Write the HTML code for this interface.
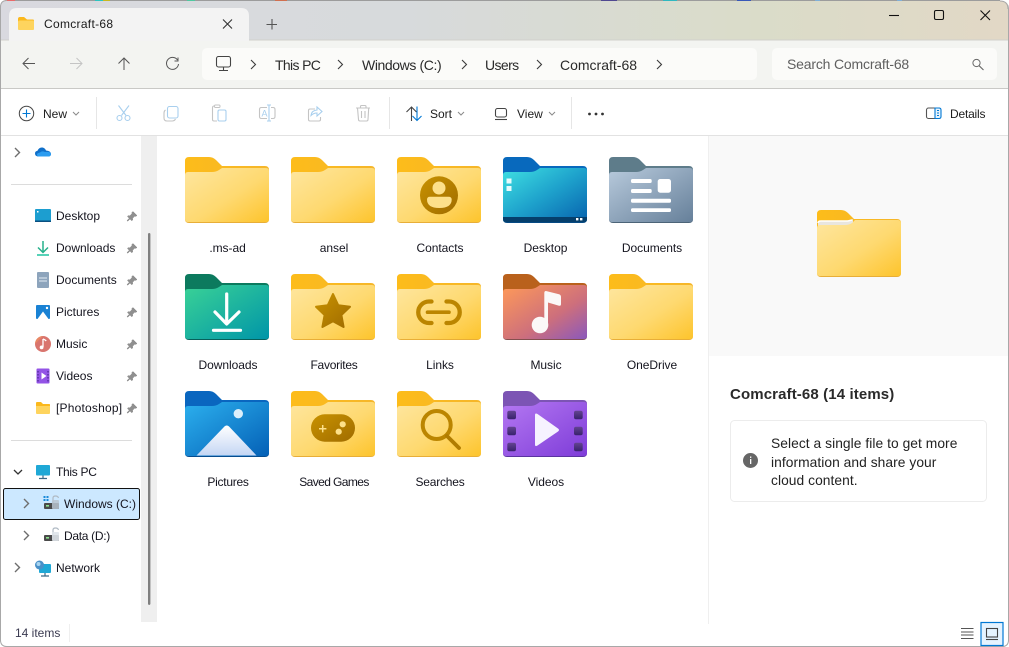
<!DOCTYPE html>
<html><head><meta charset="utf-8"><title>Comcraft-68</title>
<style>
html,body{margin:0;padding:0;width:1009px;height:647px;overflow:hidden;background:#fff}
body{font-family:"Liberation Sans","DejaVu Sans",sans-serif;color:#1a1a1a;position:relative;font-size:12px}
.a{position:absolute}
.t{position:absolute;white-space:nowrap;line-height:16px;height:16px}
.n{font-size:14px;color:#2a2a2a}
.c{font-size:12px;color:#1c1c1c}
.s{font-size:12px;letter-spacing:0;color:#14141e}
.l{font-size:12px;width:106px;text-align:center;letter-spacing:-.05px;color:#14141e}
svg{position:absolute;overflow:visible}
.f{width:84px;height:66px}
</style></head><body>
<svg width="0" height="0" style="position:absolute">
<defs>
<linearGradient id="gy" x1="0" y1="0" x2="1" y2="1"><stop offset="0" stop-color="#fee69f"/><stop offset=".55" stop-color="#fed970"/><stop offset="1" stop-color="#fdc42c"/></linearGradient>
<linearGradient id="gb" x1="0" y1="0" x2="1" y2="0"><stop offset="0" stop-color="#fdbc1a"/><stop offset="1" stop-color="#f5b62a"/></linearGradient>
<linearGradient id="gd" x1="0" y1="0" x2="1" y2="1"><stop offset="0" stop-color="#c89200"/><stop offset="1" stop-color="#a06c00"/></linearGradient>
<linearGradient id="gDesk" x1="0" y1="0" x2="1" y2="1"><stop offset="0" stop-color="#3fe0e2"/><stop offset=".5" stop-color="#1ea2cc"/><stop offset="1" stop-color="#0762ae"/></linearGradient>
<linearGradient id="gDoc" x1="0" y1="0" x2="1" y2="1"><stop offset="0" stop-color="#b8cadc"/><stop offset="1" stop-color="#66809a"/></linearGradient>
<linearGradient id="gDl" x1="0" y1="0" x2="1" y2="1"><stop offset="0" stop-color="#3ad296"/><stop offset="1" stop-color="#0095a8"/></linearGradient>
<linearGradient id="gMu" x1="0" y1="0" x2="1" y2="1"><stop offset="0" stop-color="#ff9a58"/><stop offset=".6" stop-color="#cd6f7c"/><stop offset="1" stop-color="#8a58bc"/></linearGradient>
<linearGradient id="gPi" x1="0" y1="0" x2="1" y2="1"><stop offset="0" stop-color="#2cb0ee"/><stop offset="1" stop-color="#0460b6"/></linearGradient>
<linearGradient id="gMt" x1="0" y1="0" x2="0" y2="1"><stop offset="0" stop-color="#ffffff"/><stop offset="1" stop-color="#c4d6f4"/></linearGradient>
<linearGradient id="gVi" x1="0" y1="0" x2="1" y2="1"><stop offset="0" stop-color="#b478f2"/><stop offset="1" stop-color="#7e3cd8"/></linearGradient>
<linearGradient id="gVd" x1="0" y1="0" x2="0" y2="1"><stop offset="0" stop-color="#644492"/><stop offset="1" stop-color="#38226c"/></linearGradient>
<linearGradient id="gBar" x1="0" y1="0" x2="1" y2="0"><stop offset="0" stop-color="#d9d9df"/><stop offset=".4" stop-color="#d7dadc"/><stop offset=".75" stop-color="#dadcc9"/><stop offset="1" stop-color="#e2d8c6"/></linearGradient>
<path id="back" d="M4 0H24Q28 0 31 3L37 9H80Q84 9 84 13V40H0V4Q0 0 4 0Z"/>
<path id="front" d="M0 18Q0 15 3 15H27Q31 15 34 13L37 11H81Q84 11 84 14V62Q84 65 81 65H3Q0 65 0 62Z"/>
<path id="rim" d="M0 50H84V62Q84 66 80 66H4Q0 66 0 62Z"/>
<symbol id="yf" viewBox="0 0 84 66" overflow="visible">
<use href="#back" fill="url(#gb)"/><use href="#rim" fill="#e8ae38"/><use href="#front" fill="url(#gy)"/>
</symbol>
<g id="pin"><path d="M6 0.5 10 4.5 8.8 5.4 7.6 5.2 5.6 7.3 5.7 9 4.7 9.8 3 8 0.7 10.2 0 9.6 2.2 7.2 0.4 5.5 1.2 4.6 2.9 4.8 5 2.6 4.8 1.5Z" fill="#8f8f8f" stroke="#8f8f8f" stroke-width=".5"/></g>
<path id="chev" d="M0 0 4.5 4.5 0 9" fill="none" stroke="#6e6e6e" stroke-width="1.4"/>
<path id="bc" d="M0 0 4.5 4.5 0 9" fill="none" stroke="#3c3c3c" stroke-width="1.1"/>
<path id="dd" d="M0 0 3 3 6 0" fill="none" stroke="#8a8a8a" stroke-width="1"/>
</defs></svg>

<!-- Title bar -->
<svg style="left:0;top:0" width="1009" height="647">
<rect x="0" y="0" width="1009" height="41" fill="url(#gBar)"/>
<rect x="0" y="0" width="1009" height="1" fill="#9c9c9c"/>
<rect x="0" y="0" width="15" height="1" fill="#e86a6a"/><rect x="95" y="0" width="8" height="1" fill="#2cc4c0"/><rect x="103" y="0" width="7" height="1" fill="#c8b820"/><rect x="187" y="0" width="8" height="1" fill="#50c8a0"/><rect x="275" y="0" width="12" height="1" fill="#d07050"/><rect x="601" y="0" width="16" height="1" fill="#504890"/><rect x="663" y="0" width="14" height="1" fill="#30b8c0"/><rect x="737" y="0" width="14" height="1" fill="#3858b8"/><rect x="815" y="0" width="5" height="1" fill="#80b0d8"/><rect x="897" y="0" width="5" height="1" fill="#80b0d8"/>
<rect x="0" y="40" width="1009" height="48" fill="#f3f4f1"/>
<rect x="0" y="39.5" width="1009" height="1" fill="#d0d0cc"/>
<path d="M9 41V16Q9 8 17 8H241Q249 8 249 16V41Z" fill="#f3f3f3"/>
<rect x="0" y="88" width="1009" height="1" fill="#c9c9c6"/>
<rect x="1" y="89" width="1007" height="47" fill="#fff"/>
<rect x="1" y="135" width="1007" height="1" fill="#e2e2e2"/>
<!-- sidebar gutter -->
<rect x="141" y="136" width="16" height="486" fill="#efefef"/>
<rect x="148" y="233" width="2.4" height="372" rx="1.2" fill="#7f7f7f"/>
<!-- preview -->
<rect x="708" y="136" width="1" height="488" fill="#efefef"/>
<rect x="709" y="136" width="299" height="220" fill="#f9f9f9"/>
<!-- address -->
<rect x="202" y="48" width="555" height="32" rx="5" fill="#fbfbf9"/>
<rect x="772" y="48" width="225" height="32" rx="5" fill="#fbfbf9"/>
<!-- window border -->
<rect x="0" y="0" width="1" height="647" fill="#a8a8a8"/>
<rect x="1008" y="0" width="1" height="647" fill="#a8a8a8"/>
<rect x="0" y="646" width="1009" height="1" fill="#a8a8a8"/>
<path d="M1000 0H1009V9Q1009 1 1000 1Z" fill="#fff"/><path d="M1000 1Q1008 1 1008 9" fill="none" stroke="#a8a8a8"/>
<path d="M0 7V0H7Q1 0 0 7Z" fill="#fff"/><path d="M0.5 7Q0.5 0.5 7 0.5" fill="none" stroke="#a8a8a8"/>
<path d="M0 640V647H7Q1 647 0 640Z" fill="#fff"/><path d="M0.5 640Q0.5 646.5 7 646.5" fill="none" stroke="#a8a8a8"/>
<path d="M1009 640V647H1002Q1008 647 1009 640Z" fill="#fff"/><path d="M1008.5 640Q1008.5 646.5 1002 646.5" fill="none" stroke="#a8a8a8"/>
<!-- separators -->
<rect x="96" y="97" width="1" height="32" fill="#e6e6e6"/><rect x="389" y="97" width="1" height="32" fill="#e6e6e6"/><rect x="571" y="97" width="1" height="32" fill="#e6e6e6"/>
<rect x="11" y="184" width="121" height="1" fill="#dcdcdc"/><rect x="11" y="440" width="121" height="1" fill="#dcdcdc"/>
<rect x="69" y="624" width="1" height="18" fill="#efefef"/>
<!-- selection -->
<rect x="3.5" y="488.5" width="136" height="31" rx="2" fill="#cce8ff" stroke="#111"/>

<!-- tab icon -->
<path d="M18 19Q18 17 20 17H24L27 19.5H33Q34 19.5 34 21V24H18Z" fill="#fbb81c"/>
<path d="M18 22Q18 20.5 19.5 20.5H33Q34 20.5 34 22V29Q34 30 33 30H19Q18 30 18 29Z" fill="#fed45e"/>
<!-- tab close, plus -->
<path d="M223 19.5 232 28.5M232 19.5 223 28.5" stroke="#333" stroke-width="1.1"/>
<path d="M272 19V29.5M266.5 24.5H277" stroke="#555" stroke-width="1.1"/>
<!-- window buttons -->
<path d="M889 15.5H899" stroke="#111" stroke-width="1.1"/>
<rect x="934.5" y="10.5" width="9" height="9" rx="1.5" fill="none" stroke="#111" stroke-width="1.1"/>
<path d="M980.5 10.5 990 20M990 10.5 980.5 20" stroke="#111" stroke-width="1.1"/>
<!-- nav -->
<path d="M35 63.5H23M28.5 58 23 63.5 28.5 69" fill="none" stroke="#555" stroke-width="1"/>
<path d="M70 63.5H82M76.5 58 82 63.5 76.5 69" fill="none" stroke="#c4c4c4" stroke-width="1"/>
<path d="M124 70V58M118.5 63.5 124 58 129.5 63.5" fill="none" stroke="#555" stroke-width="1"/>
<path d="M177.5 60A6 6 0 1 0 178.5 64M178 57.5V61H174.5" fill="none" stroke="#555" stroke-width="1"/>
<!-- monitor -->
<rect x="216.5" y="56.5" width="14" height="10.5" rx="2" fill="none" stroke="#444" stroke-width="1.1"/>
<path d="M223.5 67V70M219 70.5H228" stroke="#444" stroke-width="1.1"/>
<use href="#bc" x="251" y="60"/><use href="#bc" x="338" y="60"/><use href="#bc" x="462" y="60"/><use href="#bc" x="537" y="60"/><use href="#bc" x="657" y="60"/>
<!-- search icon -->
<circle cx="976.5" cy="63" r="3.6" fill="none" stroke="#666" stroke-width="1"/><path d="M979.2 65.8 983.5 70" stroke="#666" stroke-width="1.1"/>
<!-- command bar -->
<circle cx="26.5" cy="113.5" r="7.2" fill="none" stroke="#444" stroke-width="1"/>
<path d="M26.5 109.5V117.5M22.5 113.5H30.5" stroke="#0078d4" stroke-width="1.1"/>
<use href="#dd" x="73" y="112"/>
<g fill="none" stroke="#a8cfee" stroke-width="1.1">
<path d="M118.5 105.5 126 115.5M129 105.5 121.5 115.5"/><circle cx="119.5" cy="118" r="2.5"/><circle cx="127.5" cy="118" r="2.5"/>
<rect x="167.5" y="106.5" width="10.5" height="11.5" rx="2"/>
<rect x="218" y="110" width="8" height="11" rx="1.5"/>
<path d="M311 115.5Q311.5 110.5 317 110V107L322 111.5 317 116V113Q313.5 113 311 115.5Z"/>
</g>
<path d="M165.5 110Q164 111 164 113V118Q164 121 167 121H172Q174.5 121 175.5 119" fill="none" stroke="#c4c4c4" stroke-width="1.1"/>
<path d="M218 108V107Q218 106 217 106H214Q212.5 106 212.5 108V119.5Q212.5 121 214 121H217" fill="none" stroke="#c4c4c4" stroke-width="1.1"/><rect x="214.5" y="105" width="5.5" height="2.5" rx="1" fill="#fff" stroke="#c4c4c4"/>
<path d="M267 107.5H261.5Q259.5 107.5 259.5 109.5V116.5Q259.5 118.5 261.5 118.5H267M271 107.5H273Q275 107.5 275 109.5V116.5Q275 118.5 273 118.5H271" fill="none" stroke="#c4c4c4" stroke-width="1.1"/>
<path d="M269 105V121M267 105H271M267 121H271" stroke="#a8cfee" stroke-width="1.1"/>
<text x="261.5" y="116.5" font-size="9" fill="#a8cfee" font-family="Liberation Sans">A</text>
<path d="M315 109H310Q308.5 109 308.5 110.5V119.5Q308.5 121 310 121H319Q320.5 121 320.5 119.5V117" fill="none" stroke="#c4c4c4" stroke-width="1.1"/>
<path d="M356 108H370M360.5 108V106.5Q360.5 105.5 361.5 105.5H365Q366 105.5 366 106.5V108M357.5 108 358.5 119.5Q358.5 121 360 121H366.5Q368 121 368 119.5L368.7 108M361.5 111V118M365 111V118" fill="none" stroke="#c4c4c4" stroke-width="1.1"/>
<path d="M411.5 121V107.5M406.5 112 411.5 107 416.5 112" fill="none" stroke="#444" stroke-width="1.1"/>
<path d="M417 106.5V120.5M412.5 116 417 120.5 421.5 116" fill="none" stroke="#0078d4" stroke-width="1.1"/>
<use href="#dd" x="458" y="112"/>
<rect x="495.5" y="108.5" width="11" height="8.5" rx="2" fill="none" stroke="#444" stroke-width="1.1"/><path d="M495 119.5H507" stroke="#444" stroke-width="1.1"/>
<use href="#dd" x="549" y="112"/>
<circle cx="589.5" cy="114" r="1.4" fill="#333"/><circle cx="596" cy="114" r="1.4" fill="#333"/><circle cx="602.5" cy="114" r="1.4" fill="#333"/>
<rect x="926.5" y="108" width="14" height="10.5" rx="2" fill="none" stroke="#555" stroke-width="1.1"/>
<path d="M935 108H939Q941 108 941 110V116.5Q941 118.5 939 118.5H935Z" fill="#e8f3fc" stroke="#0078d4" stroke-width="1.1"/>
<path d="M937 110.5H939M937 113H939M937 115.5H939" stroke="#0078d4"/>

<!-- sidebar icons -->
<use href="#chev" x="15" y="148"/>
<path d="M39 156.5Q35 156.5 35 153.5Q35 151.2 37.5 150.8Q39 147 42.5 147.5Q45 148 46 150.5Q51 151 51 154Q51 156.5 48 156.5Z" fill="#0f6fc9"/><path d="M39 156.5Q37 156.5 37 154.5Q37 153 40 152.5Q42 150.5 45 152Q51 151.5 51 154Q51 156.5 48 156.5Z" fill="#2b9cf0"/>
<!-- desktop -->
<rect x="35" y="209" width="16" height="13" rx="1" fill="#1c9ed0"/><rect x="35" y="220.5" width="16" height="1.5" fill="#0a4f80"/><rect x="37" y="211" width="1.5" height="1.5" fill="#fff"/>
<!-- downloads -->
<path d="M43 241V252M38 247.5 43 252.5 48 247.5" fill="none" stroke="#27b08c" stroke-width="1.5"/><path d="M37 255H49" stroke="#1fc3a0" stroke-width="1.5"/>
<!-- documents -->
<rect x="37" y="272" width="12" height="16" rx="1" fill="#8da4bc"/><path d="M39 278H47M39 281H47" stroke="#e4ecf4"/>
<!-- pictures -->
<rect x="36" y="305" width="14" height="14" rx="1" fill="#1a82d4"/><path d="M37.5 319 43 311.5 48.5 319Z" fill="#fff"/><circle cx="47" cy="308" r="1.2" fill="#fff"/>
<!-- music -->
<circle cx="43" cy="344" r="8" fill="#d9756e"/><path d="M35 344A8 8 0 0 1 43 336Z" fill="#f09060" opacity=".7"/><path d="M43 339V347" stroke="#fff" stroke-width="1.3"/><circle cx="41.6" cy="347.4" r="1.9" fill="#fff"/><path d="M43 339Q45 339.5 46.2 341" stroke="#fff" fill="none" stroke-width="1.4"/>
<!-- videos -->
<rect x="36.5" y="368.5" width="13" height="15" rx="1" fill="#9353e6"/><path d="M41.5 372.5 46.5 376 41.5 379.5Z" fill="#fff"/><path d="M38 371V382M48 371V382" stroke="#4a2a90" stroke-dasharray="1.5 1.5" stroke-width="1.2"/>
<!-- photoshop folder -->
<path d="M36 403Q36 402 37 402H41L43 404H49.5Q50 404 50 405V408H36Z" fill="#fbb81c"/><path d="M36 406H50V413Q50 414 49 414H37Q36 414 36 413Z" fill="#fed45e"/>
<use href="#pin" x="127" y="211"/><use href="#pin" x="127" y="243"/><use href="#pin" x="127" y="275"/><use href="#pin" x="127" y="307"/><use href="#pin" x="127" y="339"/><use href="#pin" x="127" y="371"/><use href="#pin" x="127" y="403"/>
<!-- tree -->
<path d="M14 470 18 474 22 470" fill="none" stroke="#333" stroke-width="1.3"/>
<rect x="36" y="465" width="14" height="10.5" rx="1" fill="#1fa8d6"/><path d="M43 475.5V478M39 478.5H47" stroke="#3a6a88" stroke-width="1.2"/>
<use href="#chev" x="24" y="499"/><use href="#chev" x="24" y="531"/><use href="#chev" x="15" y="563"/>
<!-- drive C -->
<g fill="#1a8ad8"><rect x="43.5" y="496" width="2" height="2"/><rect x="46.5" y="496" width="2" height="2"/><rect x="43.5" y="499" width="2" height="2"/><rect x="46.5" y="499" width="2" height="2"/></g>
<rect x="44" y="503" width="15" height="6" rx="1" fill="#4a4a4a"/><rect x="46" y="505" width="3" height="1.6" fill="#8fe28f"/><path d="M53 503V498Q53 496 55.5 496Q58 496 58.5 498" fill="none" stroke="#b0bac4" stroke-width="1.2"/><rect x="52" y="500" width="7" height="9" rx="1" fill="#b8c4d0" opacity=".85"/>
<!-- drive D -->
<rect x="44" y="535" width="15" height="6" rx="1" fill="#4a4a4a"/><rect x="46" y="537" width="3" height="1.6" fill="#8fe28f"/><path d="M53 535V530Q53 528 55.5 528Q58 528 58.5 530" fill="none" stroke="#b0bac4" stroke-width="1.2"/><rect x="52" y="532" width="7" height="9" rx="1" fill="#dfe4ea" opacity=".9"/>
<!-- network -->
<rect x="39" y="564" width="12" height="9" rx="1" fill="#1fa8d6"/><path d="M45 573V575.5M41 576H49" stroke="#3a6a88" stroke-width="1.2"/><circle cx="39.5" cy="565" r="4.5" fill="#4a90c8"/><circle cx="38.5" cy="564" r="2" fill="#a8d4f0"/>
<!-- status icons -->
<path d="M961 628.5H973.5M961 632H973.5M961 635H973.5M961 638.5H973.5" stroke="#555" stroke-width="1"/>
<rect x="981" y="622.5" width="22" height="23" fill="#e5f3ff" stroke="#0078d4" stroke-width="1.2"/>
<rect x="986.5" y="628.5" width="11" height="8.5" fill="none" stroke="#444" stroke-width="1.1"/><path d="M986 639.5H998" stroke="#444" stroke-width="1.1"/>
<!-- card -->
<rect x="730.5" y="420.5" width="256" height="81" rx="4" fill="#fff" stroke="#ececec"/>
<circle cx="750.5" cy="460.5" r="7.5" fill="#666"/><rect x="750" y="459" width="1.3" height="5" fill="#fff"/><rect x="750" y="456.5" width="1.3" height="1.4" fill="#fff"/>
<!-- preview folder -->
<g transform="translate(817 210)">
<path d="M4 0H24Q28 0 31 3L37 9H80Q84 9 84 13V40H0V4Q0 0 4 0Z" fill="url(#gb)"/>
<path d="M1 12Q1 10.5 3 10.5H29Q33 10.5 36 9V16H1Z" fill="#e9e6df"/>
<path d="M1 13Q1 11 4 11H31L35 10" fill="none" stroke="#fff" stroke-width="1.5"/>
<path d="M0 50H84V63Q84 67 80 67H4Q0 67 0 63Z" fill="#e8ae38"/>
<path d="M0 18Q0 15 3 15H28Q32 15 35 13L38 10H81Q84 10 84 13V63Q84 66 81 66H3Q0 66 0 63Z" fill="url(#gy)"/>
</g>

<!-- folders row 1 -->
<use href="#yf" x="185" y="157" width="84" height="66"/>
<use href="#yf" x="291" y="157" width="84" height="66"/>
<g transform="translate(397 157)">
<use href="#yf" width="84" height="66"/>
<circle cx="42" cy="38.3" r="19" fill="url(#gd)"/><circle cx="42" cy="31" r="6.5" fill="#fde08a"/><path d="M30 42.5Q30 39.7 33 39.7H51.5Q54.7 39.7 54.7 42.5Q54.7 51 42.3 51Q30 51 30 42.5Z" fill="#fde08a"/>
</g>
<g transform="translate(503 157)">
<use href="#back" fill="#0869bd"/><use href="#rim" fill="#064a84"/><use href="#front" fill="url(#gDesk)"/>
<path d="M0 60H84V62Q84 65 81 65H3Q0 65 0 62Z" fill="#053f6c"/>
<rect x="3.5" y="21.5" width="5" height="5" fill="#e8fbfc"/><rect x="3.5" y="29" width="5" height="5" fill="#e8fbfc"/>
<rect x="73" y="61" width="2.4" height="2.4" fill="#fff"/><rect x="77" y="61" width="2.4" height="2.4" fill="#fff"/>
</g>
<g transform="translate(609 157)">
<use href="#back" fill="#5e7c8a"/><use href="#rim" fill="#4c6478"/><use href="#front" fill="url(#gDoc)"/>
<g fill="#fff"><rect x="22" y="22" width="20.7" height="4" rx="1.5"/><rect x="22" y="32" width="20.7" height="4" rx="1.5"/><rect x="48.7" y="22" width="13.3" height="13.7" rx="2.5"/><rect x="22" y="41.7" width="40" height="4" rx="1.5"/><rect x="22" y="51.3" width="40" height="3.7" rx="1.5"/></g>
</g>
<!-- row 2 -->
<g transform="translate(185 274)">
<use href="#back" fill="#0c7a5e"/><use href="#rim" fill="#07605a"/><use href="#front" fill="url(#gDl)"/>
<path d="M41.7 20V49M30 38 41.7 50 54 38M28.5 56.3H55.5" fill="none" stroke="#fff" stroke-width="3.2" stroke-linecap="round" stroke-linejoin="round"/>
</g>
<g transform="translate(291 274)">
<use href="#yf" width="84" height="66"/>
<path d="M42 20 47.2 31.2 59 32.8 50.4 41 52.6 53 42 47.2 31.4 53 33.6 41 25 32.8 36.8 31.2Z" fill="url(#gd)" stroke="url(#gd)" stroke-width="2" stroke-linejoin="round"/>
</g>
<g transform="translate(397 274)">
<use href="#yf" width="84" height="66"/>
<path d="M34.5 27.5H32A10.7 10.7 0 0 0 32 49H34.5M49.5 27.5H52A10.7 10.7 0 0 1 52 49H49.5" fill="none" stroke="#bb8500" stroke-width="4.3" stroke-linecap="round"/>
<path d="M30.5 38.2H52" stroke="#bb8500" stroke-width="3.6" stroke-linecap="round"/>
</g>
<g transform="translate(503 274)">
<use href="#back" fill="#b9611c"/><use href="#rim" fill="#84504e"/><use href="#front" fill="url(#gMu)"/>
<circle cx="37" cy="51" r="8.3" fill="#fbf8f8"/>
<path d="M41.3 19Q41.3 16.5 44 17.2L56 20.3Q58 21 58 23V30Q58 32.2 56 31.7L45 28.5V51H41.3Z" fill="#fbf8f8"/>
</g>
<use href="#yf" x="609" y="274" width="84" height="66"/>
<!-- row 3 -->
<g transform="translate(185 391)">
<use href="#back" fill="#0a66bf"/><use href="#rim" fill="#064c8e"/><use href="#front" fill="url(#gPi)"/>
<circle cx="53.3" cy="22.7" r="4.7" fill="#dceffb"/>
<path d="M38.5 36.5Q41.7 32.5 45 36.5L71.5 64.5H11.5Z" fill="url(#gMt)"/>
</g>
<g transform="translate(291 391)">
<use href="#yf" width="84" height="66"/>
<rect x="20" y="23.3" width="44" height="27.4" rx="13.7" fill="url(#gd)"/>
<path d="M31.7 34V41.4M28 37.7H35.4" stroke="#fde08a" stroke-width="1.5"/>
<circle cx="51.7" cy="33.3" r="3.1" fill="#fde08a"/><circle cx="47.7" cy="40.7" r="3.1" fill="#fde08a"/>
</g>
<g transform="translate(397 391)">
<use href="#yf" width="84" height="66"/>
<circle cx="39.7" cy="34" r="14" fill="none" stroke="#bb8500" stroke-width="4"/>
<path d="M50 45 62 57" stroke="#b07c00" stroke-width="3.8" stroke-linecap="round"/>
</g>
<g transform="translate(503 391)">
<use href="#back" fill="#7c54b4"/><use href="#rim" fill="#5a34a0"/><use href="#front" fill="url(#gVi)"/>
<g fill="url(#gVd)"><rect x="4.3" y="19.7" width="8.7" height="8.6" rx="2"/><rect x="4.3" y="35.7" width="8.7" height="8.6" rx="2"/><rect x="4.3" y="51.7" width="8.7" height="8.6" rx="2"/><rect x="71" y="19.7" width="8.7" height="8.6" rx="2"/><rect x="71" y="35.7" width="8.7" height="8.6" rx="2"/><rect x="71" y="51.7" width="8.7" height="8.6" rx="2"/></g>
<path d="M32 24Q32 21.5 34.5 23L55 37.5Q57 39 55 40.5L34.5 54.5Q32 56 32 53.5Z" fill="#f6f2ff"/>
</g>
</svg>

<!-- Text -->
<div class="t" style="left:44px;top:16px;font-size:12px;letter-spacing:.3px;color:#1a1a1a">Comcraft-68</div>
<div class="t n" style="left:275px;top:57px;letter-spacing:-.65px">This PC</div>
<div class="t n" style="left:362px;top:57px;letter-spacing:-.4px">Windows (C:)</div>
<div class="t n" style="left:485px;top:57px;letter-spacing:-.6px">Users</div>
<div class="t n" style="left:560px;top:57px">Comcraft-68</div>
<div class="t" style="left:787px;top:56px;font-size:14px;color:#5f5f5f;letter-spacing:-.18px">Search Comcraft-68</div>
<div class="t c" style="left:43px;top:106px">New</div>
<div class="t c" style="left:430px;top:106px">Sort</div>
<div class="t c" style="left:517px;top:106px">View</div>
<div class="t c" style="left:950px;top:106px;letter-spacing:-.2px">Details</div>
<div class="t s" style="left:56px;top:208px">Desktop</div>
<div class="t s" style="left:56px;top:240px">Downloads</div>
<div class="t s" style="left:56px;top:272px">Documents</div>
<div class="t s" style="left:56px;top:304px">Pictures</div>
<div class="t s" style="left:56px;top:336px">Music</div>
<div class="t s" style="left:56px;top:368px">Videos</div>
<div class="t s" style="left:56px;top:400px;letter-spacing:.2px">[Photoshop]</div>
<div class="t s" style="left:56px;top:464px;letter-spacing:-.3px">This PC</div>
<div class="t s" style="left:64px;top:496px">Windows (C:)</div>
<div class="t s" style="left:64px;top:528px;letter-spacing:-.3px">Data (D:)</div>
<div class="t s" style="left:56px;top:560px">Network</div>
<div class="t" style="left:15px;top:625px;font-size:12px;color:#3a3a50">14 items</div>

<div class="t l" style="left:174.5px;top:240px">.ms-ad</div>
<div class="t l" style="left:281px;top:240px">ansel</div>
<div class="t l" style="left:387px;top:240px">Contacts</div>
<div class="t l" style="left:492.5px;top:240px">Desktop</div>
<div class="t l" style="left:599px;top:240px">Documents</div>
<div class="t l" style="left:175px;top:357px">Downloads</div>
<div class="t l" style="left:281px;top:357px;letter-spacing:-.25px">Favorites</div>
<div class="t l" style="left:387px;top:357px">Links</div>
<div class="t l" style="left:493px;top:357px">Music</div>
<div class="t l" style="left:599px;top:357px">OneDrive</div>
<div class="t l" style="left:175px;top:474px;letter-spacing:-.25px">Pictures</div>
<div class="t l" style="left:281px;top:474px;letter-spacing:-.6px">Saved Games</div>
<div class="t l" style="left:387px;top:474px;letter-spacing:-.2px">Searches</div>
<div class="t l" style="left:493px;top:474px">Videos</div>

<div class="t" style="left:730px;top:387px;font-size:15px;font-weight:bold;color:#2a2a2a;letter-spacing:.12px">Comcraft-68 (14 items)</div>
<div class="t" style="left:771px;top:436px;font-size:13.8px;color:#222;letter-spacing:.05px">Select a single file to get more</div>
<div class="t" style="left:771px;top:454.5px;font-size:13.8px;color:#222;letter-spacing:.05px">information and share your</div>
<div class="t" style="left:771px;top:473px;font-size:13.8px;color:#222;letter-spacing:.05px">cloud content.</div>
</body></html>
